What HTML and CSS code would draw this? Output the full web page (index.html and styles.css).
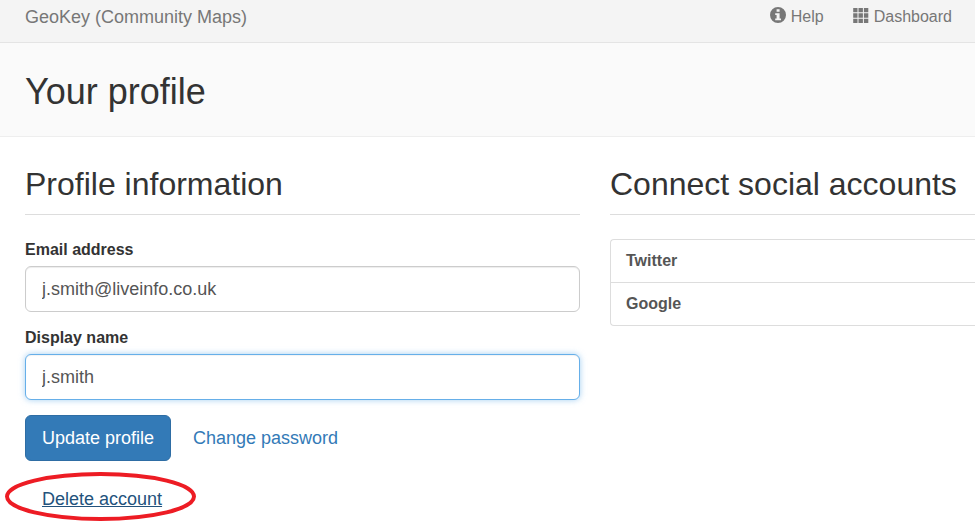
FILE: index.html
```html
<!DOCTYPE html>
<html lang="en">
<head>
<meta charset="utf-8">
<title>Your profile</title>
<link rel="stylesheet" href="styles.css">
</head>
<body>
<nav class="navbar">
  <a class="brand">GeoKey (Community Maps)</a>
  <div class="nav-links">
    <a class="nav-link"><svg class="icon" width="16" height="16" viewBox="0 0 16 16"><path fill="currentColor" fill-rule="evenodd" d="M8 0a8 8 0 1 0 0 16A8 8 0 0 0 8 0zM6.600 2.200h3v2.600h-3zM5.200 6.200h4.400v5.300H11v1.700H5.200v-1.700h1.400V7.900H5.200z"/></svg>Help</a>
    <a class="nav-link"><svg class="icon" width="16" height="16" viewBox="0 0 16 16"><path fill="currentColor" d="M.2 1h4.300v4.200H.2zM5.500 1h4.400v4.200H5.500zM10.900 1h4.400v4.200h-4.400zM.2 6.300h4.300v4.400H.2zM5.500 6.300h4.400v4.400H5.500zM10.900 6.300h4.400v4.400h-4.400zM.2 11.700h4.300V16H.2zM5.500 11.700h4.400V16H5.500zM10.900 11.700h4.400V16h-4.400z"/></svg>Dashboard</a>
  </div>
</nav>
<header class="page-header"><h1>Your profile</h1></header>
<main class="row">
  <section class="column">
    <h2>Profile information</h2>
    <form>
      <label for="email">Email address</label>
      <input class="field" id="email" type="text" value="j.smith@liveinfo.co.uk">
      <label for="name">Display name</label>
      <input class="field active" id="name" type="text" value="j.smith">
      <div class="actions">
        <button class="button" type="button">Update profile</button>
        <a class="link">Change password</a>
      </div>
      <div class="delete-row">
        <a class="delete">Delete account</a>
        <svg class="ring" width="192" height="50" viewBox="0 0 192 50"><ellipse cx="95.500" cy="25.500" rx="93.500" ry="22.500" fill="none" stroke="#ed1c24" stroke-width="4"/></svg>
      </div>
    </form>
  </section>
  <section class="column">
    <h2>Connect social accounts</h2>
    <ul class="accounts"><li>Twitter</li><li>Google</li></ul>
  </section>
</main>
</body>
</html>
```
FILE: styles.css
```css
* { box-sizing: border-box; }
body {
  margin: 0;
  height: 521px;
  background: #fff;
  color: #333;
  font: 16px/23px "Liberation Sans", Arial, sans-serif;
}
.navbar {
  display: flex;
  justify-content: space-between;
  height: 43px;
  padding: 5px 23px 0 25px;
  background: #f4f4f4;
  border-bottom: 1px solid #e4e4e4;
  color: #777;
}
.brand { padding-top: 1px; font-size: 18px; }
.nav-links { display: flex; gap: 29px; }
.nav-link { display: flex; }
.icon { margin: 2px 5px 0 0; }
.page-header {
  height: 94px;
  padding: 29px 25px 0;
  background: #fafafa;
  border-bottom: 1px solid #eee;
}
h1, h2 { margin: 0; font-weight: 400; }
h1 { font-size: 36px; line-height: 40px; }
.row {
  display: grid;
  grid-template-columns: 555px 1fr;
  gap: 30px;
  padding: 27px 0 0 25px;
}
h2 {
  height: 51px;
  font-size: 32px;
  line-height: 40px;
  border-bottom: 1px solid #ddd;
}
form { padding-top: 23px; }
label {
  display: block;
  margin-bottom: 5px;
  font-weight: 700;
}
.field {
  display: block;
  width: 100%;
  height: 46px;
  margin-bottom: 14px;
  padding: 10px 16px;
  border: 1px solid #ccc;
  border-radius: 6px;
  outline: 0;
  box-shadow: inset 0 1px 1px rgba(0, 0, 0, .075);
  background: #fff;
  color: #555;
  font: 18px/24px "Liberation Sans", Arial, sans-serif;
}
.active {
  margin-bottom: 15px;
  border-color: #66afe9;
  box-shadow: inset 0 1px 1px rgba(0, 0, 0, .05), 0 0 6px rgba(102, 175, 233, .6);
}
.actions { display: flex; align-items: center; gap: 22px; }
.button {
  width: 146px;
  height: 46px;
  padding: 0;
  border: 1px solid #2e6da4;
  border-radius: 6px;
  background: #337ab7;
  color: #fff;
  font: 18px/24px "Liberation Sans", Arial, sans-serif;
}
.link { color: #337ab7; font-size: 18px; }
.delete-row {
  position: relative;
  padding: 27px 17px 0;
  font-size: 18px;
}
.delete { color: #23527c; text-decoration: underline; }
.ring { position: absolute; left: -20px; top: 10px; }
.accounts {
  margin: 24px 0 0;
  padding: 0;
  list-style: none;
  border: 1px solid #ddd;
  border-right: 0;
  border-radius: 4px 0 0 4px;
  color: #555;
  font-weight: 700;
}
.accounts li { height: 42px; padding: 9px 15px; }
.accounts li + li { height: 43px; border-top: 1px solid #ddd; }
```
